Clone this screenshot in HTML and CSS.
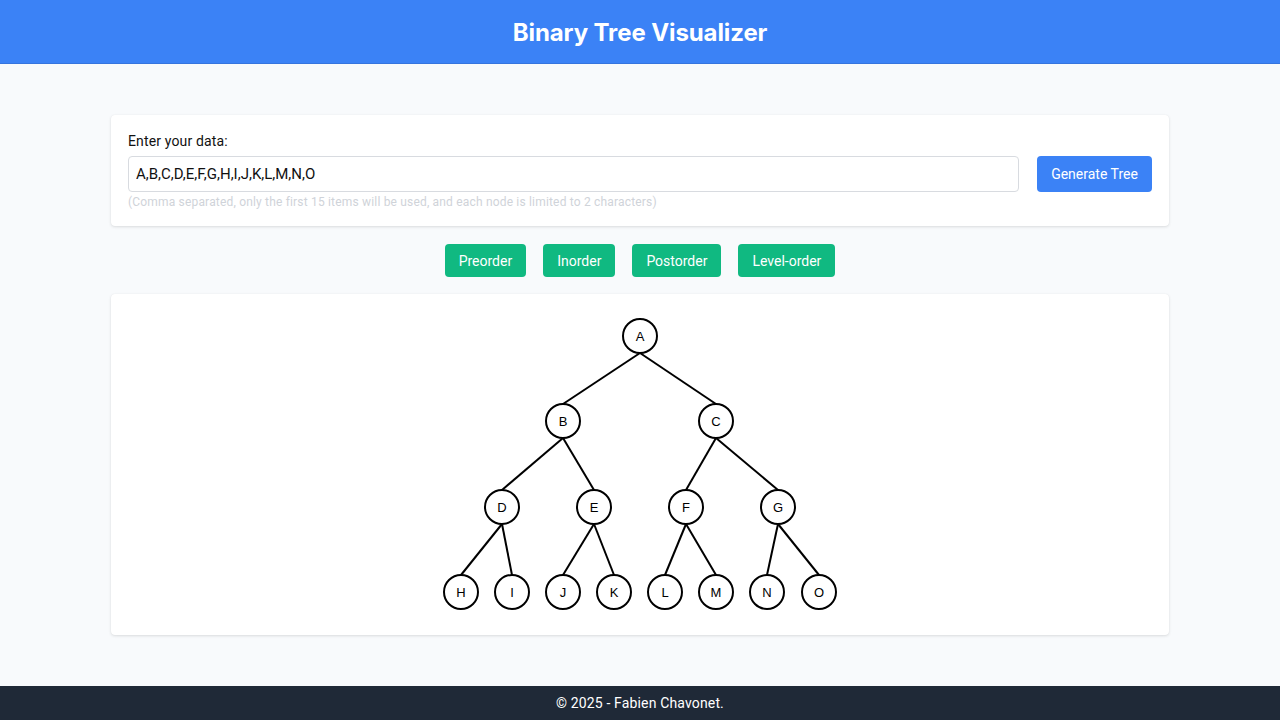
FILE: index.html
```html
<!DOCTYPE html>
<html lang="en">
<head>
<meta charset="utf-8">
<title>Binary Tree Visualizer</title>
<link rel="stylesheet" href="styles.css">
</head>
<body>
<header class="topbar"><h1 class="title">Binary Tree Visualizer</h1></header>
<main class="main">
  <section class="card input-card">
    <label class="label" for="data">Enter your data:</label>
    <div class="input-row">
      <input id="data" class="text-input" type="text" value="A,B,C,D,E,F,G,H,I,J,K,L,M,N,O">
      <button class="btn btn-blue">Generate Tree</button>
    </div>
    <p class="hint">(Comma separated, only the first 15 items will be used, and each node is limited to 2 characters)</p>
  </section>
  <div class="traversals">
    <button class="btn btn-green">Preorder</button>
    <button class="btn btn-green">Inorder</button>
    <button class="btn btn-green">Postorder</button>
    <button class="btn btn-green">Level-order</button>
  </div>
  <section class="card tree-card">
    <svg class="tree" width="1058" height="341" viewBox="111 294 1058 341">
      <g class="edges">
        <line x1="640" y1="353" x2="563" y2="404"/>
        <line x1="640" y1="353" x2="716" y2="404"/>
        <line x1="563" y1="438" x2="502" y2="490"/>
        <line x1="563" y1="438" x2="594" y2="490"/>
        <line x1="716" y1="438" x2="686" y2="490"/>
        <line x1="716" y1="438" x2="778" y2="490"/>
        <line x1="502" y1="524" x2="461" y2="575"/>
        <line x1="502" y1="524" x2="512" y2="575"/>
        <line x1="594" y1="524" x2="563" y2="575"/>
        <line x1="594" y1="524" x2="614" y2="575"/>
        <line x1="686" y1="524" x2="665" y2="575"/>
        <line x1="686" y1="524" x2="716" y2="575"/>
        <line x1="778" y1="524" x2="767" y2="575"/>
        <line x1="778" y1="524" x2="819" y2="575"/>
      </g>
      <g class="nodes">
        <circle cx="640" cy="336" r="17"/><text x="640" y="336">A</text>
        <circle cx="563" cy="421" r="17"/><text x="563" y="421">B</text>
        <circle cx="716" cy="421" r="17"/><text x="716" y="421">C</text>
        <circle cx="502" cy="507" r="17"/><text x="502" y="507">D</text>
        <circle cx="594" cy="507" r="17"/><text x="594" y="507">E</text>
        <circle cx="686" cy="507" r="17"/><text x="686" y="507">F</text>
        <circle cx="778" cy="507" r="17"/><text x="778" y="507">G</text>
        <circle cx="461" cy="592" r="17"/><text x="461" y="592">H</text>
        <circle cx="512" cy="592" r="17"/><text x="512" y="592">I</text>
        <circle cx="563" cy="592" r="17"/><text x="563" y="592">J</text>
        <circle cx="614" cy="592" r="17"/><text x="614" y="592">K</text>
        <circle cx="665" cy="592" r="17"/><text x="665" y="592">L</text>
        <circle cx="716" cy="592" r="17"/><text x="716" y="592">M</text>
        <circle cx="767" cy="592" r="17"/><text x="767" y="592">N</text>
        <circle cx="819" cy="592" r="17"/><text x="819" y="592">O</text>
      </g>
    </svg>
  </section>
</main>
<footer class="footer">© 2025 - Fabien Chavonet.</footer>
</body>
</html>
```
FILE: styles.css
```css
* { box-sizing: border-box; }
html, body { margin: 0; padding: 0; }
body {
  font-family: Roboto, "Helvetica Neue", Arial, sans-serif;
  background: #f8fafc;
  color: #111827;
  min-height: 100vh;
  display: flex;
  flex-direction: column;
}
.topbar {
  background: #3b82f6;
  height: 64px;
  display: flex;
  align-items: center;
  justify-content: center;
  border-bottom: 1px solid #3574de;
}
.title {
  margin: 2px 0 0;
  color: #fff;
  font-family: Inter, Roboto, sans-serif;
  font-size: 24px;
  font-weight: 700;
  letter-spacing: -0.1px;
}
.main {
  flex: 1;
  width: 1058px;
  margin: 0 auto;
  padding-top: 51px;
  display: flex;
  flex-direction: column;
}
.card {
  background: #fff;
  border-radius: 4px;
  box-shadow: 0 1px 3px rgba(0,0,0,0.12), 0 0 1px rgba(0,0,0,0.06);
}
.input-card {
  padding: 18px 17px 16px;
  height: 111px;
}
.label {
  display: block;
  font-size: 14px;
  letter-spacing: 0.15px;
  color: #111;
  line-height: 16px;
  margin-bottom: 7px;
}
.input-row {
  display: flex;
  gap: 18px;
}
.text-input {
  flex: 1;
  height: 36px;
  border: 1px solid #d8dbe0;
  border-radius: 4px;
  padding: 0 7px;
  font-family: inherit;
  font-size: 15px;
  color: #111;
  background: #fff;
}
.btn {
  border: none;
  border-radius: 4px;
  color: #fff;
  font-family: inherit;
  font-size: 14px;
  cursor: pointer;
}
.btn-blue {
  background: #3b82f6;
  height: 36px;
  width: 115px;
  padding: 0;
}
.hint {
  margin: 2px 0 0;
  font-size: 12px;
  letter-spacing: 0.18px;
  line-height: 16px;
  color: #cfd3d9;
}
.traversals {
  display: flex;
  justify-content: center;
  gap: 17px;
  margin: 18px 0 17px;
}
.btn-green {
  background: #10b981;
  height: 33px;
  padding: 0 14px;
}
.tree-card {
  height: 341px;
  margin-bottom: 51px;
}
.tree { display: block; }
.edges line { stroke: #000; stroke-width: 2; }
.nodes circle { fill: #fff; stroke: #000; stroke-width: 2; }
.nodes text {
  font-family: "Liberation Sans", Arial, sans-serif;
  font-size: 13px;
  text-anchor: middle;
  dominant-baseline: central;
  fill: #000;
}
.footer {
  background: #1f2937;
  color: #fff;
  height: 34px;
  display: flex;
  align-items: center;
  justify-content: center;
  font-size: 14px;
  letter-spacing: 0.15px;
}
```
